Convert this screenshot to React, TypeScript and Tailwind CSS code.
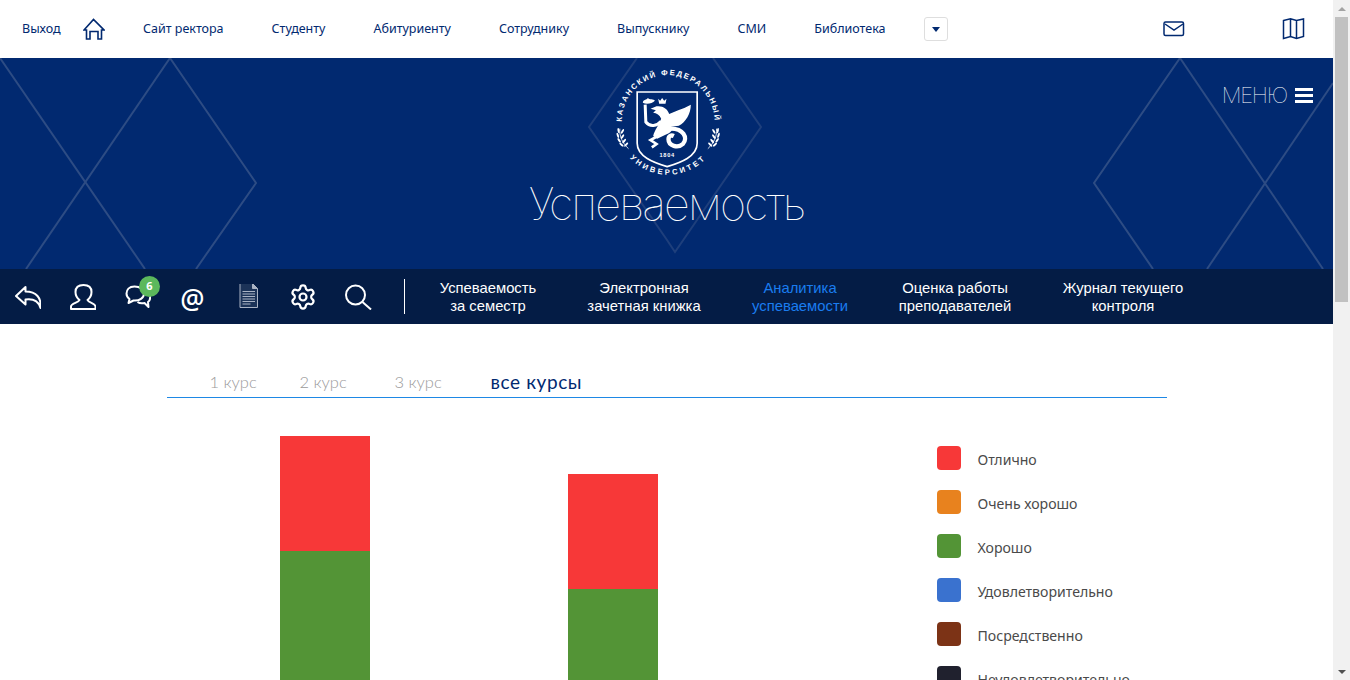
import { Settings } from "lucide-react";

const topLinks = ["Сайт ректора", "Студенту", "Абитуриенту", "Сотруднику", "Выпускнику", "СМИ", "Библиотека"];

const navItems = [
  { lines: ["Успеваемость", "за семестр"], width: "w-[96px]" },
  { lines: ["Электронная", "зачетная книжка"], width: "w-[116px]" },
  { lines: ["Аналитика", "успеваемости"], width: "w-[96px]", active: true },
  { lines: ["Оценка работы", "преподавателей"], width: "w-[114px]" },
  { lines: ["Журнал текущего", "контроля"], width: "w-[122px]" },
];

const legend = [
  { label: "Отлично", color: "bg-[#f73838]" },
  { label: "Очень хорошо", color: "bg-[#e8821e]" },
  { label: "Хорошо", color: "bg-[#539436]" },
  { label: "Удовлетворительно", color: "bg-[#3a72cf]" },
  { label: "Посредственно", color: "bg-[#7c3316]" },
  { label: "Неудовлетворительно", color: "bg-[#20212e]" },
];

const tabs = [
  { label: "1 курс", width: "w-[90px]" },
  { label: "2 курс", width: "w-[95px]" },
  { label: "3 курс", width: "w-[96px]" },
];

// laurel leaves: x, y, angle
const laurelLeaves = [
  [24, 212, -10], [36, 214, 30], [22, 226, -20], [36, 230, 35],
  [26, 241, -35], [41, 243, 40], [33, 254, -50], [47, 254, 45],
];

// Diamond lattice behind the hero, in page coordinates
function HeroLines() {
  return (
    <svg className="absolute inset-0 w-full h-full" viewBox="0 58 1333 211" fill="none" stroke="#2d4c84" strokeWidth="2">
      <path d="M0 58 L145 269" />
      <path d="M170 58 L26 269" />
      <path d="M170 58 L256 183 L196 269" />
      <path d="M1180 58 L1094 183 L1153 269" />
      <path d="M1180 58 L1323 269" />
      <path d="M1333 83 L1207 269" />
      <path d="M637 58 L589 127 L667 240 L675 252 L761 127 L713 58" stroke="#1e3f7c" />
    </svg>
  );
}

function Logo() {
  return (
    <svg width="120" height="120" viewBox="-10.5 6 360 360" className="relative shrink-0">
      <defs>
        <path id="arcTop" d="M36 208 A139 139 0 1 1 310 208" />
        <path id="arcBottom" d="M16 187 A157 157 0 0 0 330 187" />
      </defs>
      <text fill="#fff" fontFamily="'Liberation Sans', sans-serif" fontWeight="700" fontSize="23" letterSpacing="5" textAnchor="middle">
        <textPath href="#arcTop" startOffset="50%">КАЗАНСКИЙ ФЕДЕРАЛЬНЫЙ</textPath>
      </text>
      <text fill="#fff" fontFamily="'Liberation Sans', sans-serif" fontWeight="700" fontSize="23" letterSpacing="8" textAnchor="middle">
        <textPath href="#arcBottom" startOffset="50%">УНИВЕРСИТЕТ</textPath>
      </text>
      {/* shield */}
      <path d="M80 96 H260 V250 C260 290 210 308 170 320 C130 308 80 290 80 250 Z" fill="none" stroke="#fff" strokeWidth="5" />
      {/* griffin */}
      <g fill="#fff">
        <path d="M120 146 L138 139 C155 136 172 146 176 162 L205 150 Q225 143 241 134 C241 160 226 186 205 197 L182 200 C190 210 180 218 165 224 L140 236 L128 228 C132 210 146 194 152 176 C148 165 138 159 128 158 L136 151 Z" />
        <path d="M97 128 C98 118 108 121 112 114 C116 120 130 116 133 122 C126 130 108 134 97 128 Z" />
        <path d="M143 116 L149 122 L155 114 L161 122 L168 116 L165 131 H146 Z" />
      </g>
      <g fill="none" stroke="#fff">
        <path strokeWidth="13" d="M178 206 C218 204 234 234 217 252 C202 266 174 258 174 238 C174 228 182 224 190 228" />
        <path strokeWidth="9" d="M152 184 C140 198 118 202 106 186 L104 134" />
        <path strokeWidth="8" d="M142 228 L120 240 L138 252 L124 262" />
      </g>
      <text x="170" y="290" fill="#fff" fontFamily="'Liberation Sans', sans-serif" fontWeight="700" fontSize="17" letterSpacing="2" textAnchor="middle">1804</text>
      {/* laurels */}
      <g fill="none" stroke="#fff" strokeWidth="2.5">
        <path d="M28 206 C26 228 36 250 54 266" />
        <path d="M318 206 C320 228 310 250 292 266" />
      </g>
      <g fill="#fff">
        {laurelLeaves.map(([x, y, a]) => (
          <g key={`${x}-${y}`}>
            <ellipse cx={x} cy={y} rx="3" ry="8" transform={`rotate(${a} ${x} ${y})`} />
            <ellipse cx={346 - x} cy={y} rx="3" ry="8" transform={`rotate(${-a} ${346 - x} ${y})`} />
          </g>
        ))}
      </g>
    </svg>
  );
}

export default function App() {
  return (
    <div className="flex h-[680px] overflow-hidden bg-white font-['Noto_Sans',sans-serif]">
      <div className="w-[1333px] shrink-0">
        {/* Top links */}
        <div className="flex h-[58px] items-center pl-[22px] text-[12.5px] text-[#012970]">
          <span className="w-[39px]">Выход</span>
          <svg width="22" height="22" viewBox="83 17 22 22" className="ml-[22px]" fill="none" stroke="#012970" strokeWidth="1.6">
            <path d="M84 29 L93.5 18.5 L104 29 H101.5 V38 H98 V30.5 H90 V38 H86.5 V29 Z" />
          </svg>
          <div className="ml-[38px] flex gap-[48px]">
            {topLinks.map((link) => (
              <span key={link} className="whitespace-nowrap">{link}</span>
            ))}
          </div>
          <button className="ml-[38px] flex h-[24px] w-[24px] items-center justify-center rounded-[3px] border border-[#dedede]">
            <span className="h-0 w-0 border-x-[4px] border-t-[5px] border-x-transparent border-t-[#012970]" />
          </button>
          <svg width="22" height="16" viewBox="1163 21 22 16" className="ml-[215px]" fill="none" stroke="#012970" strokeWidth="1.5">
            <rect x="1164" y="22" width="19.5" height="13.5" rx="1.5" />
            <path d="M1165 24 L1174 30 L1183 24" />
          </svg>
          <svg width="23" height="22" viewBox="1281.5 18 23 22" className="ml-[97px]" fill="none" stroke="#012970" strokeWidth="1.5">
            <path d="M1283 20.5 L1290 18.8 L1296 20.5 L1303 19 V36.5 L1296 38.5 L1290 36.5 L1283 38.5 Z M1290 18.8 V36.5 M1296 20.5 V38.5" />
          </svg>
        </div>

        {/* Hero */}
        <div className="relative flex h-[211px] flex-col items-center bg-[#012970]">
          <HeroLines />
          <div className="mt-[4px]">
            <Logo />
          </div>
          <h1 className="relative -mt-[3px] font-['Inter',sans-serif] text-[45px] leading-[50px] font-thin tracking-[-1.8px] text-white">
            Успеваемость
          </h1>
          <div className="absolute right-[20px] top-[24px] flex items-center gap-[8px]">
            <span className="font-['Inter',sans-serif] text-[22px] leading-[26px] font-thin tracking-[-1.2px] text-white">МЕНЮ</span>
            <div className="flex w-[18px] flex-col gap-[3px]">
              <span className="h-[3px] bg-white" />
              <span className="h-[3px] bg-white" />
              <span className="h-[3px] bg-white" />
            </div>
          </div>
        </div>

        {/* Dark nav bar */}
        <div className="flex h-[55px] items-center bg-[#041c45] text-white">
          <div className="flex w-[55px] justify-center">
            <svg width="26" height="26" viewBox="14.5 284 26 26" fill="none" stroke="#fff" strokeWidth="2" strokeLinejoin="round">
              <path d="M25 287 L15.5 296 L25 304.5 V299.5 C32 298.5 38 301 40 308 C41 298 36 291.5 25 291.5 Z" />
            </svg>
          </div>
          <div className="flex w-[55px] justify-center">
            <svg width="26" height="26" viewBox="69.5 284 26 26" fill="none" stroke="#fff" strokeWidth="2" strokeLinejoin="round">
              <path d="M70.5 309 V306.5 C70.5 303 78 303 79 300 C76.5 298 75 295 75 292 C75 287 78 285 83 285 C88 285 91 287 91 292 C91 295 89.5 298 87 300 C88 303 95 303 95 306.5 V309 Z" />
            </svg>
          </div>
          <div className="relative flex w-[55px] justify-center">
            <svg width="26" height="26" viewBox="124.5 284 26 26" fill="none" stroke="#fff" strokeWidth="2" strokeLinejoin="round">
              <path d="M134 286.5 C128.5 286.5 126 290 126 293.5 C126 296 127.5 298 129 299 L128 303 L133 300.5 C139 301 143.5 298 143.5 293.5 C143.5 289.5 139.5 286.5 134 286.5 Z" />
              <path d="M137 302 C140 304 142 303.5 144 303 L148 307 L147.5 302 C149.5 300.5 150 298.5 149.5 296" />
            </svg>
            <span className="absolute left-[29px] top-[-8px] flex h-[21px] w-[21px] items-center justify-center rounded-full bg-[#5cb85c] text-[11px] font-bold">6</span>
          </div>
          <div className="flex w-[55px] justify-center">
            <span className="mt-[5px] text-[27px] leading-[28px] font-medium">@</span>
          </div>
          <div className="flex w-[55px] justify-center">
            <svg width="26" height="26" viewBox="234.5 284 26 26" fill="none" stroke="#aab3c4" strokeWidth="1">
              <path d="M239.5 283.5 H252 L257 288.5 V307.5 H239.5 Z" fill="#1c3358" />
              <path d="M252 283.5 V288.5 H257" fill="#aab3c4" />
              <path d="M242 291.5 H254.5 M242 294 H254.5 M242 296.5 H254.5 M242 299 H254.5 M242 301.5 H254.5 M242 304 H250" strokeWidth="1.2" />
            </svg>
          </div>
          <div className="flex w-[55px] justify-center">
            <Settings size={28} strokeWidth={1.9} />
          </div>
          <div className="flex w-[55px] justify-center">
            <svg width="28" height="26" viewBox="343.5 284 28 26" fill="none" stroke="#fff" strokeWidth="2">
              <circle cx="355" cy="295" r="9.5" />
              <path d="M362 302 L370.5 309.5" />
            </svg>
          </div>
          <div className="ml-[19px] h-[35px] w-px bg-white" />
          <div className="ml-[35px] flex gap-[50px]">
            {navItems.map((item) => (
              <div
                key={item.lines[0]}
                className={`${item.width} whitespace-nowrap flex flex-col items-center font-['Liberation_Sans',sans-serif] text-[14.8px] leading-[18px] ${item.active ? "text-[#1a7cf0]" : "text-white"}`}
              >
                <span>{item.lines[0]}</span>
                <span>{item.lines[1]}</span>
              </div>
            ))}
          </div>
        </div>

        {/* Content */}
        <div className="mx-auto w-[1000px]">
          <div className="mt-[46px] flex h-[28px] items-end border-b border-[#1e88e5] pb-[5px] pl-[43px] font-['Lato',sans-serif] text-[16.5px] font-light leading-[20px]">
            {tabs.map((tab) => (
              <span key={tab.label} className={`${tab.width} text-[#9a9a9a]`}>{tab.label}</span>
            ))}
            <span className="text-[19px] font-normal tracking-[0.6px] text-[#012970]">все курсы</span>
          </div>
          <div className="mt-[38px] flex">
            <div className="flex w-[770px] pl-[113px]">
              <div className="w-[90px]">
                <div className="h-[115px] bg-[#f73838]" />
                <div className="h-[400px] bg-[#539436]" />
              </div>
              <div className="ml-[198px] mt-[38px] w-[90px]">
                <div className="h-[115px] bg-[#f73838]" />
                <div className="h-[400px] bg-[#539436]" />
              </div>
            </div>
            <div className="flex flex-col gap-[20px] pt-[10px]">
              {legend.map((row) => (
                <div key={row.label} className="flex h-[24px] items-center">
                  <span className={`h-[24px] w-[24px] rounded-[4px] ${row.color}`} />
                  <span className="ml-[17px] mt-[3px] text-[14.1px] text-[#4a4a4a]">{row.label}</span>
                </div>
              ))}
            </div>
          </div>
        </div>
      </div>

      {/* Scrollbar */}
      <div className="flex w-[17px] shrink-0 flex-col items-center bg-[#f1f1f1]">
        <div className="flex h-[17px] items-center">
          <span className="h-0 w-0 border-x-[4px] border-b-[4px] border-x-transparent border-b-[#a3a3a3]" />
        </div>
        <div className="h-[285px] w-[13px] bg-[#c1c1c1]" />
        <div className="mt-auto flex h-[17px] items-center">
          <span className="h-0 w-0 border-x-[4px] border-t-[4px] border-x-transparent border-t-[#505050]" />
        </div>
      </div>
    </div>
  );
}
